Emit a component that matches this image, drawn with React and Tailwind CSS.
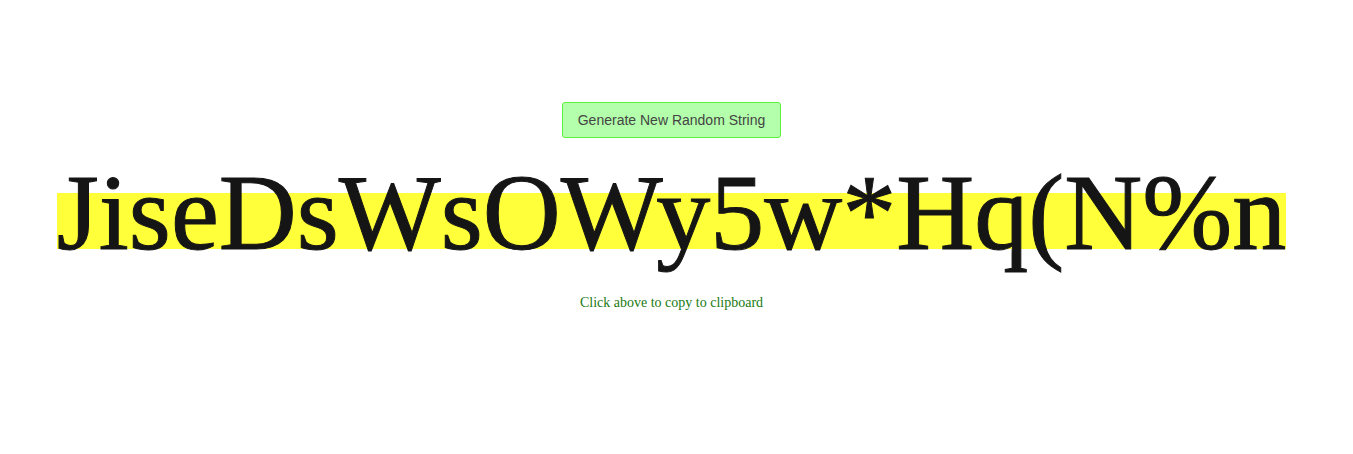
export default function App() {
  return (
    <div className="min-h-[454px] bg-white flex flex-col items-center pr-[10px] pt-[102px]">
      <button
        type="button"
        className="h-[36px] px-[15px] bg-[#b3ffab] border border-[#5cf23c] rounded-[3px] text-[14px] text-[#444444] font-['Liberation_Sans',Arial,sans-serif]"
      >
        Generate New Random String
      </button>
      <div className="mt-[15px] leading-[120px] text-[108px] text-[#151515] [-webkit-text-stroke:1px_#151515] font-['Liberation_Serif','Times_New_Roman',serif] whitespace-nowrap">
        <span className="bg-[linear-gradient(transparent_40px,#ffff3a_40px,#ffff3a_96px,transparent_96px)]">
          JiseDsWsOWy5w*Hq(N%n
        </span>
      </div>
      <p className="mt-[19px] text-[14px] text-[#1a7a12] font-['Liberation_Serif','Times_New_Roman',serif]">
        Click above to copy to clipboard
      </p>
    </div>
  );
}
